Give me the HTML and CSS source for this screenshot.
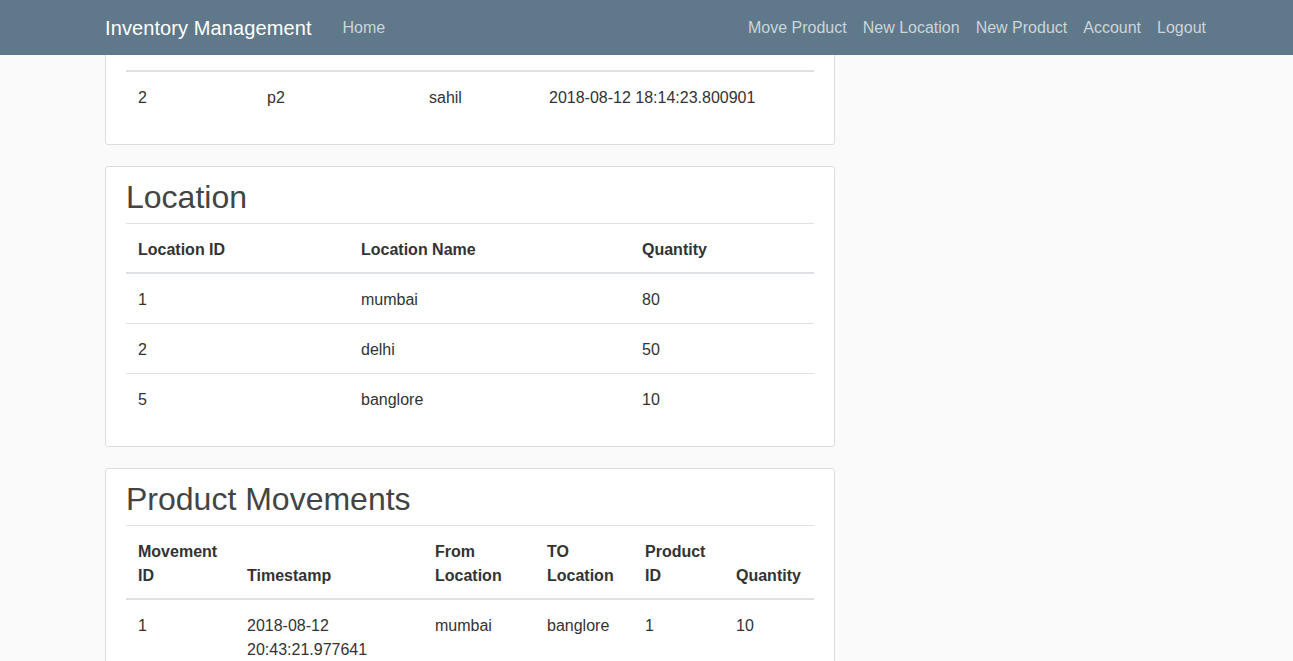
FILE: index.html
```html
<!DOCTYPE html>
<html lang="en">
<head>
<meta charset="utf-8">
<title>Inventory Management</title>
<link rel="stylesheet" href="styles.css">
</head>
<body>
<header class="site-header">
  <nav class="navbar">
    <div class="nav-left">
      <a class="brand" href="#">Inventory Management</a>
      <a class="nav-link" href="#">Home</a>
    </div>
    <div class="nav-right">
      <a class="nav-link" href="#">Move Product</a>
      <a class="nav-link" href="#">New Location</a>
      <a class="nav-link" href="#">New Product</a>
      <a class="nav-link" href="#">Account</a>
      <a class="nav-link" href="#">Logout</a>
    </div>
  </nav>
</header>

<main class="page">
  <section class="content-section">
    <h2 class="section-title">Products</h2>
    <table class="table">
      <colgroup><col class="w129"><col class="w162"><col class="w120"><col></colgroup>
      <thead>
        <tr><th>Product ID</th><th>Product Name</th><th>Owner</th><th>Date Created</th></tr>
      </thead>
      <tbody>
        <tr><td>2</td><td>p2</td><td>sahil</td><td>2018-08-12 18:14:23.800901</td></tr>
      </tbody>
    </table>
  </section>

  <section class="content-section">
    <h2 class="section-title">Location</h2>
    <table class="table">
      <colgroup><col class="w223"><col class="w281"><col></colgroup>
      <thead>
        <tr><th>Location ID</th><th>Location Name</th><th>Quantity</th></tr>
      </thead>
      <tbody>
        <tr><td>1</td><td>mumbai</td><td>80</td></tr>
        <tr><td>2</td><td>delhi</td><td>50</td></tr>
        <tr><td>5</td><td>banglore</td><td>10</td></tr>
      </tbody>
    </table>
  </section>

  <section class="content-section">
    <h2 class="section-title">Product Movements</h2>
    <table class="table">
      <colgroup><col class="w109"><col class="w188"><col class="w112"><col class="w98"><col class="w91"><col></colgroup>
      <thead>
        <tr><th>Movement ID</th><th>Timestamp</th><th>From Location</th><th>TO Location</th><th>Product ID</th><th>Quantity</th></tr>
      </thead>
      <tbody>
        <tr><td>1</td><td>2018-08-12 20:43:21.977641</td><td>mumbai</td><td>banglore</td><td>1</td><td>10</td></tr>
        <tr><td>2</td><td>2018-08-12 20:45:02.113528</td><td>banglore</td><td>delhi</td><td>2</td><td>5</td></tr>
      </tbody>
    </table>
  </section>
</main>
</body>
</html>
```

FILE: styles.css
```css
* { box-sizing: border-box; }

html, body {
  margin: 0;
  padding: 0;
}

body {
  background: #fafafa;
  color: #333333;
  font-family: "Segoe UI", "Liberation Sans", Arial, sans-serif;
  font-size: 16px;
  line-height: 1.5;
}

a { text-decoration: none; }

.site-header {
  position: fixed;
  top: 0;
  left: 0;
  right: 0;
  z-index: 10;
}

.navbar {
  height: 55px;
  background-color: #5f788a;
  display: flex;
  align-items: center;
  justify-content: space-between;
  padding: 1px 79px 0 105px;
}

.nav-left, .nav-right {
  display: flex;
  align-items: center;
}

.brand {
  color: #ffffff;
  font-size: 20px;
  line-height: 30px;
  margin-right: 23px;
  letter-spacing: 0.1px;
}

.nav-link {
  color: #cbd5db;
  font-size: 16px;
  line-height: 24px;
  padding: 0 8px;
}

.page {
  width: 730px;
  margin-left: 105px;
  margin-top: -36px;
}

.content-section {
  background: #ffffff;
  padding: 10px 20px;
  border: 1px solid #dddddd;
  border-radius: 3px;
  margin-bottom: 21px;
}

.section-title {
  color: #444444;
  font-size: 32px;
  font-weight: 500;
  line-height: 36px;
  padding-top: 2px;
  margin: 0 0 8px 0;
}

.table {
  width: 100%;
  border-collapse: collapse;
  table-layout: fixed;
  margin-bottom: 13px;
}

.table th,
.table td {
  text-align: left;
  padding: 14px 12px 11px;
  border-top: 1px solid #dee2e6;
  vertical-align: top;
  line-height: 24px;
}

.table th {
  font-weight: 700;
  padding-bottom: 10px;
}

.table thead th {
  vertical-align: bottom;
  border-bottom: 2px solid #dee2e6;
}

.w129 { width: 129px; }
.w162 { width: 162px; }
.w120 { width: 120px; }
.w223 { width: 223px; }
.w281 { width: 281px; }
.w109 { width: 109px; }
.w188 { width: 188px; }
.w112 { width: 112px; }
.w98 { width: 98px; }
.w91 { width: 91px; }
```
